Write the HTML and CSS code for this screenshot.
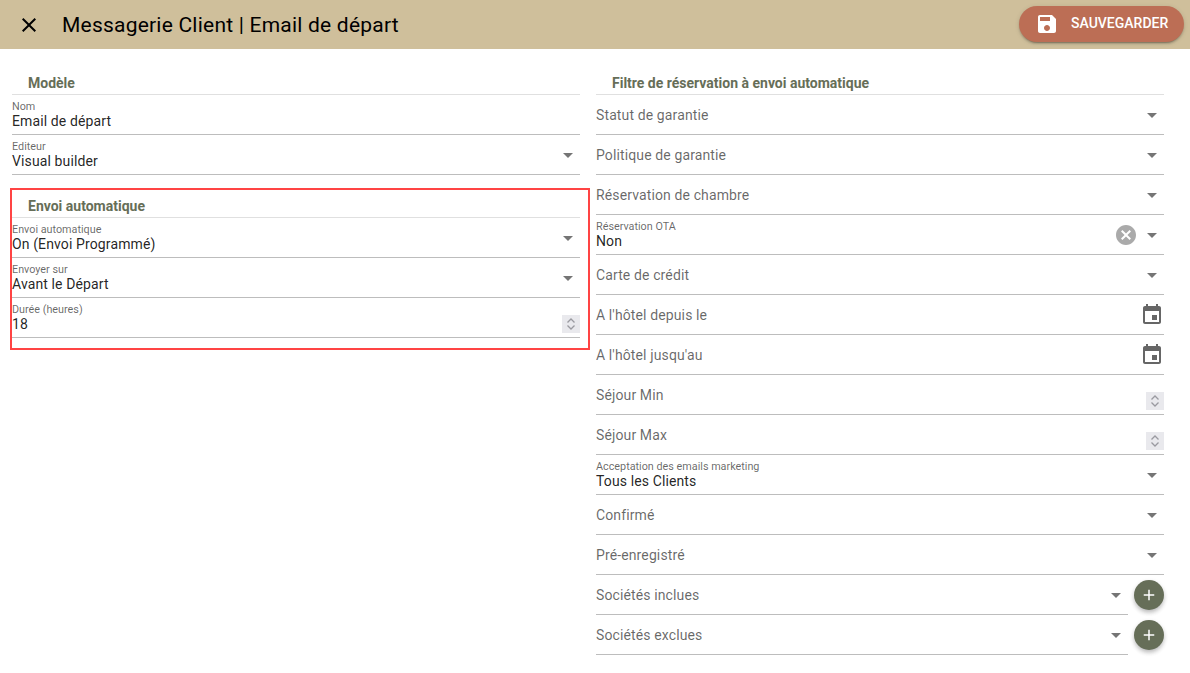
FILE: index.html
```html
<!DOCTYPE html>
<html lang="fr">
<head>
<meta charset="utf-8">
<title>Messagerie Client | Email de départ</title>
<link rel="stylesheet" href="styles.css">
</head>
<body>
<svg class="defs" aria-hidden="true">
  <symbol id="arrow" viewBox="0 0 24 24"><path d="M7 10l5 5 5-5z"/></symbol>
  <symbol id="event" viewBox="0 0 24 24"><path d="M17 12h-5v5h5v-5zM16 1v2H8V1H6v2H5c-1.11 0-1.99.9-1.99 2L3 19c0 1.1.89 2 2 2h14c1.1 0 2-.9 2-2V5c0-1.1-.9-2-2-2h-1V1h-2zm3 18H5V8h14v11z"/></symbol>
  <symbol id="plus" viewBox="0 0 24 24"><path d="M19 13h-6v6h-2v-6H5v-2h6V5h2v6h6v2z"/></symbol>
  <symbol id="spin" viewBox="0 0 18 18"><path d="M5.5 7.5 9 4l3.500 3.500M5.500 10.500 9 14l3.500-3.500" fill="none" stroke="#9a9aa0" stroke-width="1.300"/></symbol>
</svg>
<header class="toolbar">
  <svg class="icon close" viewBox="0 0 24 24"><path d="M19 6.410L17.590 5 12 10.590 6.410 5 5 6.410 10.590 12 5 17.590 6.410 19 12 13.410 17.590 19 19 17.590 13.410 12z"/></svg>
  <h1 class="title">Messagerie Client | Email de départ</h1>
  <button class="save" type="button">
    <svg class="icon" viewBox="0 0 24 24"><path d="M17 3H5c-1.110 0-2 .9-2 2v14c0 1.100.89 2 2 2h14c1.100 0 2-.9 2-2V7l-4-4zm-5 16c-1.660 0-3-1.340-3-3s1.340-3 3-3 3 1.340 3 3-1.340 3-3 3zm3-10H5V5h10v4z"/></svg>
    <span class="save-text">Sauvegarder</span>
  </button>
</header>
<main class="columns">
  <div class="column">
    <section>
      <h2 class="heading">Modèle</h2>
      <div class="field"><div class="body"><label>Nom</label><div class="value">Email de départ</div></div></div>
      <div class="field"><div class="body"><label>Editeur</label><div class="value">Visual builder</div></div><svg class="icon arrow"><use href="#arrow"/></svg></div>
    </section>
    <section class="highlight">
      <h2 class="heading">Envoi automatique</h2>
      <div class="field"><div class="body"><label>Envoi automatique</label><div class="value">On (Envoi Programmé)</div></div><svg class="icon arrow"><use href="#arrow"/></svg></div>
      <div class="field"><div class="body"><label>Envoyer sur</label><div class="value">Avant le Départ</div></div><svg class="icon arrow"><use href="#arrow"/></svg></div>
      <div class="field"><div class="body"><label>Durée (heures)</label><div class="value">18</div></div><svg class="spinner"><use href="#spin"/></svg></div>
    </section>
  </div>
  <div class="column">
    <section>
      <h2 class="heading">Filtre de réservation à envoi automatique</h2>
      <div class="field"><div class="placeholder">Statut de garantie</div><svg class="icon arrow"><use href="#arrow"/></svg></div>
      <div class="field"><div class="placeholder">Politique de garantie</div><svg class="icon arrow"><use href="#arrow"/></svg></div>
      <div class="field"><div class="placeholder">Réservation de chambre</div><svg class="icon arrow"><use href="#arrow"/></svg></div>
      <div class="field"><div class="body"><label>Réservation OTA</label><div class="value">Non</div></div>
        <svg class="icon clear" viewBox="0 0 24 24"><path d="M12 2C6.470 2 2 6.470 2 12s4.470 10 10 10 10-4.470 10-10S17.530 2 12 2zm5 13.590L15.590 17 12 13.410 8.410 17 7 15.590 10.590 12 7 8.410 8.410 7 12 10.590 15.590 7 17 8.410 13.410 12 17 15.590z"/></svg>
        <svg class="icon arrow"><use href="#arrow"/></svg></div>
      <div class="field"><div class="placeholder">Carte de crédit</div><svg class="icon arrow"><use href="#arrow"/></svg></div>
      <div class="field"><div class="placeholder">A l'hôtel depuis le</div><svg class="icon date"><use href="#event"/></svg></div>
      <div class="field"><div class="placeholder">A l'hôtel jusqu'au</div><svg class="icon date"><use href="#event"/></svg></div>
      <div class="field"><div class="placeholder">Séjour Min</div><svg class="spinner"><use href="#spin"/></svg></div>
      <div class="field"><div class="placeholder">Séjour Max</div><svg class="spinner"><use href="#spin"/></svg></div>
      <div class="field"><div class="body"><label>Acceptation des emails marketing</label><div class="value">Tous les Clients</div></div><svg class="icon arrow"><use href="#arrow"/></svg></div>
      <div class="field"><div class="placeholder">Confirmé</div><svg class="icon arrow"><use href="#arrow"/></svg></div>
      <div class="field"><div class="placeholder">Pré-enregistré</div><svg class="icon arrow"><use href="#arrow"/></svg></div>
      <div class="add-row">
        <div class="field"><div class="placeholder">Sociétés inclues</div><svg class="icon arrow"><use href="#arrow"/></svg></div>
        <button class="fab" type="button"><svg class="icon"><use href="#plus"/></svg></button>
      </div>
      <div class="add-row">
        <div class="field"><div class="placeholder">Sociétés exclues</div><svg class="icon arrow"><use href="#arrow"/></svg></div>
        <button class="fab" type="button"><svg class="icon"><use href="#plus"/></svg></button>
      </div>
    </section>
  </div>
</main>
</body>
</html>
```
FILE: styles.css
```css
* { box-sizing: border-box; }
html, body { margin: 0; height: 100%; overflow: hidden; }
body {
  background: #fff;
  color: rgba(0, 0, 0, .87);
  font-family: Roboto, "Liberation Sans", sans-serif;
  font-size: 14px;
}
.defs { display: none; }
.icon { width: 24px; height: 24px; flex: none; fill: currentColor; display: block; }

.toolbar {
  height: 49px;
  background: #cfbf9b;
  display: flex;
  align-items: center;
  padding: 0 6px 0 17px;
}
.close { color: #000; }
.title {
  margin: 0 0 0 21px;
  font-size: 21px;
  font-weight: 400;
  letter-spacing: .22px;
  color: #000;
  flex: 1;
}
.save {
  width: 165px;
  height: 36px;
  margin-top: -1px;
  border: 0;
  border-radius: 18px;
  background: #bc6e55;
  color: #fff;
  display: flex;
  align-items: center;
  gap: 12px;
  padding: 0 16px;
  font: 500 14px Roboto, sans-serif;
  letter-spacing: 0;
  text-transform: uppercase;
  box-shadow: 0 3px 1px -2px rgba(0,0,0,.2), 0 2px 2px rgba(0,0,0,.14), 0 1px 5px rgba(0,0,0,.12);
}
.save-text { padding-bottom: 2px; }

.columns {
  display: grid;
  grid-template-columns: 568px 568px;
  gap: 16px;
  padding: 18px 0 0 12px;
}
.heading {
  height: 28px;
  margin: 0;
  padding: 8px 0 0 16px;
  border-bottom: 1px solid #e0e0e0;
  font-size: 14px;
  line-height: 16px;
  font-weight: 700;
  color: #666e58;
}
.field {
  height: 40px;
  display: flex;
  align-items: center;
  border-bottom: 1px solid #bdbdbd;
}
.body { flex: 1; min-width: 0; }
.body label {
  display: block;
  font-size: 10.8px;
  line-height: 15px;
  margin-bottom: -2px;
  color: rgba(0, 0, 0, .6);
}
.value { font-size: 14px; line-height: 18px; letter-spacing: .12px; color: rgba(0,0,0,.87); }
.placeholder { flex: 1; font-size: 14px; letter-spacing: .12px; color: rgba(0, 0, 0, .6); }
.arrow, .date, .clear { color: rgba(0, 0, 0, .54); }
.date { color: #666; }
.clear { color: #aaa; margin-right: 2px; }
.spinner {
  width: 18px;
  height: 18px;
  flex: none;
  background: #e9e9ed;
  align-self: flex-end;
  margin-bottom: 4px;
}

.highlight {
  margin: 13px -10px 0 -2px;
  padding: 0 8px 10px 0;
  border: 2px solid #f44;
}
.add-row { display: flex; align-items: flex-start; gap: 6px; }
.add-row .field { flex: 1; }
.fab {
  width: 30px;
  height: 30px;
  margin-top: 5px;
  padding: 0;
  border: 0;
  border-radius: 50%;
  background: #666e58;
  color: #fff;
  display: flex;
  align-items: center;
  justify-content: center;
  box-shadow: 0 3px 5px -1px rgba(0,0,0,.2), 0 2px 5px rgba(0,0,0,.14);
}
.fab .icon { width: 18px; height: 18px; }
```
